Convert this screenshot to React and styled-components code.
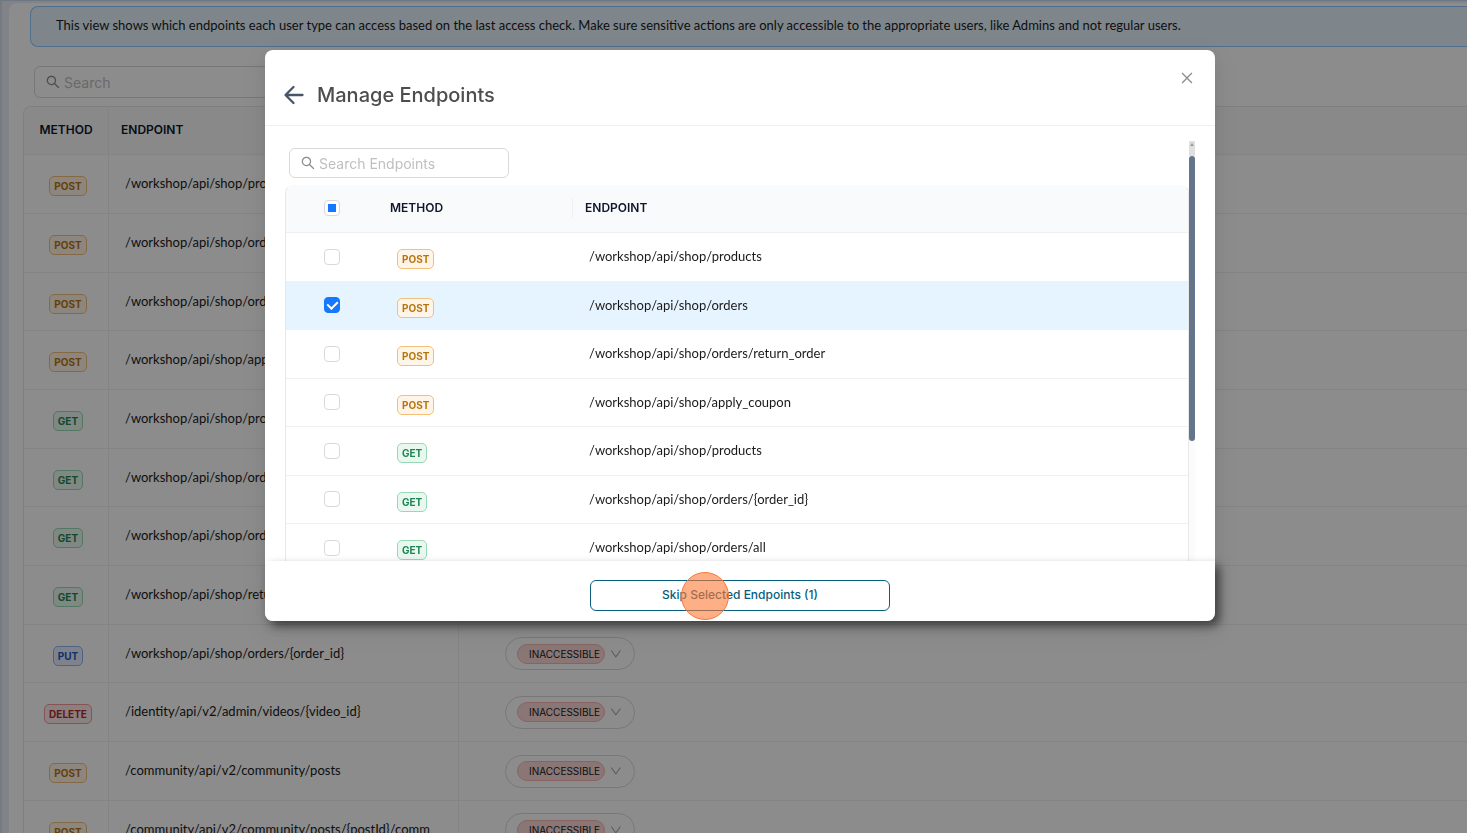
import React, { useState } from 'react';
import styled, { createGlobalStyle, css } from 'styled-components';
import { AiOutlineSearch, AiOutlineClose, AiOutlineDown } from 'react-icons/ai';

const theme = {
  font: "Inter, 'Liberation Sans', sans-serif",
  textFont: "Lato, 'Liberation Sans', sans-serif",
  text: '#1a1a1a',
  heading: '#0f172a',
  muted: '#bfbfbf',
  border: '#d9d9d9',
  line: '#f0f0f0',
  primary: '#1677ff',
  teal: '#075e7d',
};

const methodColors = {
  POST: { color: '#b8740c', background: '#fff4e8', border: '#f3c07c' },
  GET: { color: '#1f8552', background: '#e8f8ef', border: '#96d9b4' },
  PUT: { color: '#2458c5', background: '#e6effe', border: '#93b4f5' },
  DELETE: { color: '#b3282d', background: '#fdeaea', border: '#f09a9c' },
};

const GlobalStyle = createGlobalStyle`
  * {
    box-sizing: border-box;
  }

  body {
    margin: 0;
    font-family: ${theme.font};
    font-size: 13px;
    color: ${theme.text};
  }

  button, input, select {
    font-family: inherit;
  }
`;

const Page = styled.div`
  height: 100vh;
  overflow: hidden;
  padding: 2px 0 0 7px;
  background-color: #eaf0fa;
  border-top: 1px solid #cbd9ee;
  border-left: 2px solid #d9dfe8;
`;

const Content = styled.main`
  min-height: 100%;
  padding: 3px 0 0 14px;
  background-color: #ffffff;
  border-top-left-radius: 8px;
`;

const Banner = styled.div`
  display: flex;
  align-items: center;
  height: 41px;
  margin-left: 7px;
  padding: 0 25px 3px;
  background-color: #e6f4ff;
  border: 1px solid #91caff;
  border-right: 0;
  border-radius: 8px 0 0 8px;
  font-family: ${theme.textFont};
  white-space: nowrap;
`;

const SearchField = styled.label`
  display: flex;
  align-items: center;
  gap: 3px;
  width: ${(props) => props.$width};
  height: ${(props) => props.$height};
  padding: 0 10px;
  border: 1px solid ${theme.border};
  border-radius: 6px;
  color: #8c8c8c;

  svg {
    flex: none;
  }

  input {
    flex: 1;
    min-width: 0;
    padding: 0;
    border: 0;
    outline: 0;
    background: transparent;
    font-size: 14px;
    color: ${theme.text};
  }

  input::placeholder {
    color: ${theme.muted};
    opacity: 1;
  }
`;

const PageSearch = styled.div`
  margin: 19px 0 8px 11px;
`;

const Table = styled.table`
  width: 100%;
  table-layout: fixed;
  border-collapse: separate;
  border-spacing: 0;
  border: 1px solid #e8e8e8;
  border-bottom: 0;
  border-radius: 8px 8px 0 0;

  th {
    height: 47px;
    padding: 0 12px 3px;
    text-align: left;
    font-size: 12px;
    font-weight: 600;
    color: ${theme.heading};
    background-color: #f9fafc;
    border-bottom: 1px solid ${theme.line};
  }

  th:first-child {
    border-top-left-radius: 8px;
  }

  td {
    padding: 0 16px 2px;
    border-bottom: 1px solid ${theme.line};
    font-family: ${theme.textFont};
    white-space: nowrap;
  }
`;

const AccessTable = styled(Table)`
  border-right: 0;
  border-top-right-radius: 0;

  th {
    height: 48px;
  }

  td {
    height: 59px;
  }

  tr:nth-child(3n) td {
    height: 58px;
  }

  td:not(:last-child),
  th:first-child {
    border-right: 1px solid ${theme.line};
  }

  th:first-child {
    padding: 0 0 3px;
    text-align: center;
  }

  td:first-child {
    padding: 0 0 0 4px;
    text-align: center;
  }

  td:last-child {
    padding: 0 16px 0 46px;
  }
`;

const EndpointTable = styled(Table)`
  border-top-color: #f9fafc;

  th:last-child {
    border-top-right-radius: 8px;
  }

  td {
    height: 49px;
  }

  tr:nth-child(even) td {
    height: 48px;
  }

  th:first-child,
  td:first-child {
    padding: 0 0 2px;
    text-align: center;
  }

  td:nth-child(2) {
    padding: 0 0 0 19px;
  }
`;

const Divided = styled.div`
  display: flex;
  align-items: center;
  justify-content: space-between;
  margin-right: -12px;

  &::after {
    content: '';
    width: 1px;
    height: 20px;
    background-color: ${theme.line};
  }
`;

const EndpointRow = styled.tr`
  ${(props) =>
    props.$selected &&
    css`
      background-color: #e6f4ff;
    `}
`;

const MethodTag = styled.span`
  display: inline-block;
  height: 20px;
  margin-top: 4px;
  padding: 0 4px;
  border: 1px solid ${(props) => methodColors[props.$method].border};
  border-radius: 5px;
  background-color: ${(props) => methodColors[props.$method].background};
  color: ${(props) => methodColors[props.$method].color};
  font-family: ${theme.font};
  font-size: 10px;
  font-weight: 700;
  line-height: 19px;
  vertical-align: middle;
`;

const StatusPill = styled.div`
  display: flex;
  align-items: center;
  gap: 4px;
  width: 130px;
  height: 33px;
  padding: 0 11px;
  border: 1px solid ${theme.border};
  border-radius: 17px;
  color: #a6a6a6;
`;

const StatusSelect = styled.select`
  appearance: none;
  width: 90px;
  height: 20px;
  padding: 0 0 0 11px;
  border: 1px solid #f7b5b2;
  border-radius: 10px;
  background-color: #fad8d6;
  color: ${theme.text};
  font-family: ${theme.font};
  font-size: 10px;
`;

const Overlay = styled.div`
  position: fixed;
  inset: 0;
  display: flex;
  justify-content: center;
  align-items: flex-start;
  padding: 50px 0 0 13px;
  background-color: rgba(0, 0, 0, 0.45);
`;

const Modal = styled.section`
  width: 950px;
  max-width: 100%;
  border-radius: 8px;
  background-color: #ffffff;
  box-shadow: 0 6px 16px rgba(0, 0, 0, 0.08), 0 9px 28px 8px rgba(0, 0, 0, 0.05);
`;

const ModalHeader = styled.header`
  display: flex;
  align-items: flex-start;
  justify-content: space-between;
  height: 76px;
  padding: 20px 20px 0 18px;
  border-bottom: 1px solid ${theme.line};
`;

const TitleGroup = styled.div`
  display: flex;
  align-items: center;
  gap: 12px;
  padding-top: 10px;
`;

const Title = styled.h2`
  margin: 0;
  font-size: 20px;
  font-weight: 500;
  line-height: 30px;
  color: #4d4d4d;
`;

const IconButton = styled.button`
  display: flex;
  padding: 0;
  border: 0;
  background: transparent;
  color: ${(props) => props.$color};
`;

const ModalBody = styled.div`
  display: flex;
  height: 435px;
  padding: 15px 20px 0;
`;

const ScrollArea = styled.div`
  flex: 1;
  overflow: hidden;
`;

const ModalSearch = styled.div`
  padding: 7px 4px;
`;

const ScrollTrack = styled.div`
  width: 6px;
  background-color: #fbfbfb;
`;

const ScrollButton = styled.div`
  display: flex;
  justify-content: center;
  height: 15px;
  padding-top: 2px;
  background-color: #dfdfdf;
`;

const ScrollThumb = styled.div`
  height: 285px;
  border-radius: 3px;
  background-color: #64748b;
`;

const Checkbox = styled.input`
  appearance: none;
  display: inline-grid;
  place-content: center;
  width: 16px;
  height: 16px;
  margin: 0;
  border: 1px solid ${theme.border};
  border-radius: 4px;
  background-color: #ffffff;
  vertical-align: middle;

  &:checked {
    border-color: ${theme.primary};
    background-color: ${theme.primary};
  }

  &:checked::before {
    content: '';
    width: 5px;
    height: 8px;
    margin-bottom: 2px;
    border: solid #ffffff;
    border-width: 0 2px 2px 0;
    transform: rotate(45deg);
  }

  &:indeterminate::before {
    content: '';
    width: 8px;
    height: 8px;
    background-color: ${theme.primary};
  }
`;

const ModalFooter = styled.footer`
  position: relative;
  display: flex;
  justify-content: center;
  align-items: center;
  height: 60px;
  padding-top: 9px;
  border-radius: 0 0 8px 8px;
  background-color: #ffffff;
  box-shadow: 5px 5px 10px rgba(0, 0, 0, 0.5);
`;

const SkipButton = styled.button`
  width: 300px;
  height: 31px;
  padding: 0 0 2px;
  border: 1px solid ${theme.teal};
  border-radius: 6px;
  background-color: #ffffff;
  color: ${theme.teal};
  font-size: 12px;
  font-weight: 500;
`;

const ClickMarker = styled.span`
  position: absolute;
  top: 11px;
  left: 416px;
  width: 48px;
  height: 48px;
  border: 1px solid #f9793a;
  border-radius: 50%;
  background-color: rgba(255, 121, 51, 0.6);
  pointer-events: none;
`;

const accessRows = [
  ['POST', '/workshop/api/shop/products'],
  ['POST', '/workshop/api/shop/orders'],
  ['POST', '/workshop/api/shop/orders/return_order'],
  ['POST', '/workshop/api/shop/apply_coupon'],
  ['GET', '/workshop/api/shop/products'],
  ['GET', '/workshop/api/shop/orders/{order_id}'],
  ['GET', '/workshop/api/shop/orders/all'],
  ['GET', '/workshop/api/shop/return_qr_code'],
  ['PUT', '/workshop/api/shop/orders/{order_id}'],
  ['DELETE', '/identity/api/v2/admin/videos/{video_id}'],
  ['POST', '/community/api/v2/community/posts'],
  ['POST', '/community/api/v2/community/posts/{postId}/comm'],
];

const endpoints = accessRows.slice(0, 7);

const BackArrow = () => (
  <svg width="22" height="22" viewBox="0 0 22 22" fill="none" stroke="currentColor" strokeWidth="2.300" strokeLinecap="round" strokeLinejoin="round">
    <path d="M19.500 11H3M10.500 3L2.500 11l8 8" />
  </svg>
);

export default function App() {
  const [selected, setSelected] = useState([1]);

  const toggle = (index) => {
    setSelected((current) =>
      current.includes(index) ? current.filter((i) => i !== index) : [...current, index]
    );
  };

  const allSelected = selected.length === endpoints.length;

  return (
    <>
      <GlobalStyle />
      <Page>
        <Content>
          <Banner>
            This view shows which endpoints each user type can access based on the last access check. Make sure sensitive actions are only accessible to the appropriate users, like Admins and not regular users.
          </Banner>
          <PageSearch>
            <SearchField $width="300px" $height="32px">
              <AiOutlineSearch size={16} />
              <input type="text" placeholder="Search" aria-label="Search" />
            </SearchField>
          </PageSearch>
          <AccessTable>
            <colgroup>
              <col width="85" />
              <col width="350" />
              <col />
            </colgroup>
            <thead>
              <tr>
                <th>METHOD</th>
                <th>ENDPOINT</th>
                <th aria-label="Access" />
              </tr>
            </thead>
            <tbody>
              {accessRows.map(([method, path], index) => (
                <tr key={index}>
                  <td>
                    <MethodTag $method={method}>{method}</MethodTag>
                  </td>
                  <td>{path}</td>
                  <td>
                    <StatusPill>
                      <StatusSelect aria-label={`Access for ${path}`}>
                        <option>INACCESSIBLE</option>
                      </StatusSelect>
                      <AiOutlineDown size={14} />
                    </StatusPill>
                  </td>
                </tr>
              ))}
            </tbody>
          </AccessTable>
        </Content>
      </Page>

      <Overlay>
        <Modal role="dialog" aria-labelledby="modal-title">
          <ModalHeader>
            <TitleGroup>
              <IconButton type="button" aria-label="Back" $color="#475569">
                <BackArrow />
              </IconButton>
              <Title id="modal-title">Manage Endpoints</Title>
            </TitleGroup>
            <IconButton type="button" aria-label="Close" $color="#8c8c8c">
              <AiOutlineClose size={16} />
            </IconButton>
          </ModalHeader>

          <ModalBody>
            <ScrollArea>
              <ModalSearch>
                <SearchField $width="220px" $height="30px">
                  <AiOutlineSearch size={16} />
                  <input type="text" placeholder="Search Endpoints" aria-label="Search Endpoints" />
                </SearchField>
              </ModalSearch>
              <EndpointTable>
                <colgroup>
                  <col width="92" />
                  <col width="195" />
                  <col />
                </colgroup>
                <thead>
                  <tr>
                    <th>
                      <Checkbox
                        type="checkbox"
                        aria-label="Select all"
                        checked={allSelected}
                        onChange={() => setSelected(allSelected ? [] : endpoints.map((_, i) => i))}
                        ref={(el) => {
                          if (el) el.indeterminate = selected.length > 0 && !allSelected;
                        }}
                      />
                    </th>
                    <th>
                      <Divided>METHOD</Divided>
                    </th>
                    <th>ENDPOINT</th>
                  </tr>
                </thead>
                <tbody>
                  {endpoints.map(([method, path], index) => (
                    <EndpointRow key={index} $selected={selected.includes(index)}>
                      <td>
                        <Checkbox
                          type="checkbox"
                          aria-label={`Select ${method} ${path}`}
                          checked={selected.includes(index)}
                          onChange={() => toggle(index)}
                        />
                      </td>
                      <td>
                        <MethodTag $method={method}>{method}</MethodTag>
                      </td>
                      <td>{path}</td>
                    </EndpointRow>
                  ))}
                </tbody>
              </EndpointTable>
            </ScrollArea>
            <ScrollTrack>
              <ScrollButton>
                <svg width="4" height="3" viewBox="0 0 4 3">
                  <path d="M2 0L4 3H0z" fill="#9a9a9a" />
                </svg>
              </ScrollButton>
              <ScrollThumb />
            </ScrollTrack>
          </ModalBody>

          <ModalFooter>
            <SkipButton type="button">Skip Selected Endpoints ({selected.length})</SkipButton>
            <ClickMarker />
          </ModalFooter>
        </Modal>
      </Overlay>
    </>
  );
}
